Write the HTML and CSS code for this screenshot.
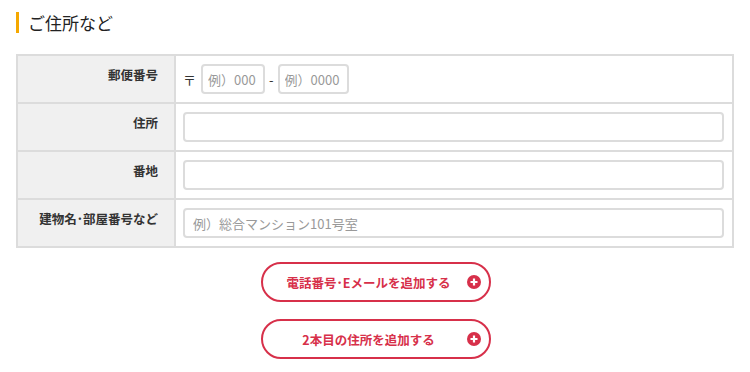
FILE: index.html
```html
<!DOCTYPE html>
<html lang="ja">
<head>
  <meta charset="UTF-8" />
  <title>ご住所など</title>
  <link rel="stylesheet" href="styles.css">
</head>
<body>
  <h2 class="sectionTitle">ご住所など</h2>

  <table class="formTable">
    <tr>
      <th>郵便番号</th>
      <td>
        <div class="zipRow">
          <span class="zipMark">〒</span>
          <input type="text" class="zip1" placeholder="例）000" />
          <span class="zipDash">-</span>
          <input type="text" class="zip2" placeholder="例）0000" />
        </div>
      </td>
    </tr>
    <tr>
      <th>住所</th>
      <td><input type="text" class="wide" /></td>
    </tr>
    <tr>
      <th>番地</th>
      <td><input type="text" class="wide" /></td>
    </tr>
    <tr>
      <th>建物名･部屋番号など</th>
      <td><input type="text" class="wide" placeholder="例）総合マンション101号室" /></td>
    </tr>
  </table>

  <div class="addButtons">
    <button class="addBtn">
      <span>電話番号･Eメールを追加する</span>
      <svg class="plus" width="14" height="14" viewBox="0 0 14 14"><circle cx="7" cy="7" r="7" fill="#d7304a"/><path d="M7 3.5v7M3.5 7h7" stroke="#fff" stroke-width="2.2"/></svg>
    </button>
    <button class="addBtn">
      <span>2本目の住所を追加する</span>
      <svg class="plus" width="14" height="14" viewBox="0 0 14 14"><circle cx="7" cy="7" r="7" fill="#d7304a"/><path d="M7 3.5v7M3.5 7h7" stroke="#fff" stroke-width="2.2"/></svg>
    </button>
  </div>
</body>
</html>
```

FILE: styles.css
```css
body {
  font-family: "Noto Sans CJK JP", "Noto Sans", sans-serif;
  margin: 0;
  padding: 12px 16px 0 16px;
  background: #fff;
  color: #333;
}
.sectionTitle {
  margin: 0 0 21px;
  padding-left: 9px;
  border-left: 3px solid #f5a800;
  font-size: 17px;
  font-weight: normal;
  line-height: 21px;
  color: #222;
}
.formTable {
  width: 718px;
  table-layout: fixed;
  border-collapse: collapse;
  border: 2px solid #dcdcdc;
  font-size: 12.5px;
}
.formTable tr {
  height: 48px;
}
.formTable th,
.formTable td {
  border: 2px solid #dcdcdc;
}
.formTable th {
  width: 140px;
  background: #f0f0f0;
  text-align: right;
  vertical-align: top;
  padding: 10px 16px 0 0;
  font-weight: bold;
  color: #333;
  line-height: 18px;
}
.formTable td {
  padding: 0 8px 0 7px;
  vertical-align: middle;
}
input {
  font-family: "Noto Sans CJK JP", "Noto Sans", sans-serif;
  font-size: 13px;
  height: 30px;
  box-sizing: border-box;
  border: 2px solid #dcdcdc;
  border-radius: 4px;
  padding: 0 8px;
  color: #333;
  outline: none;
}
input::placeholder {
  color: #999;
}
.wide {
  width: 100%;
  display: block;
}
.zipRow {
  display: flex;
  align-items: center;
}
.zipMark {
  font-size: 13px;
  margin: 0 5px 0 0;
}
.zip1,
.zip2 {
  padding: 0 5px;
}
.zip1 {
  width: 64px;
}
.zip2 {
  width: 71px;
}
.zipDash {
  margin: 0 4px;
  font-size: 13px;
}
.addButtons {
  display: flex;
  flex-direction: column;
  align-items: center;
  gap: 17px;
  margin-top: 14px;
  margin-left: 1px;
}
.addBtn {
  width: 230px;
  height: 40px;
  border: 2px solid #d7304a;
  border-radius: 20px;
  background: #fff;
  color: #d7304a;
  font-family: "Noto Sans CJK JP", "Noto Sans", sans-serif;
  font-size: 12.5px;
  font-weight: bold;
  display: flex;
  align-items: center;
  justify-content: center;
  position: relative;
  padding: 0 14px 0 0;
  cursor: pointer;
}
.plus {
  position: absolute;
  right: 8px;
  top: 11px;
}
```
